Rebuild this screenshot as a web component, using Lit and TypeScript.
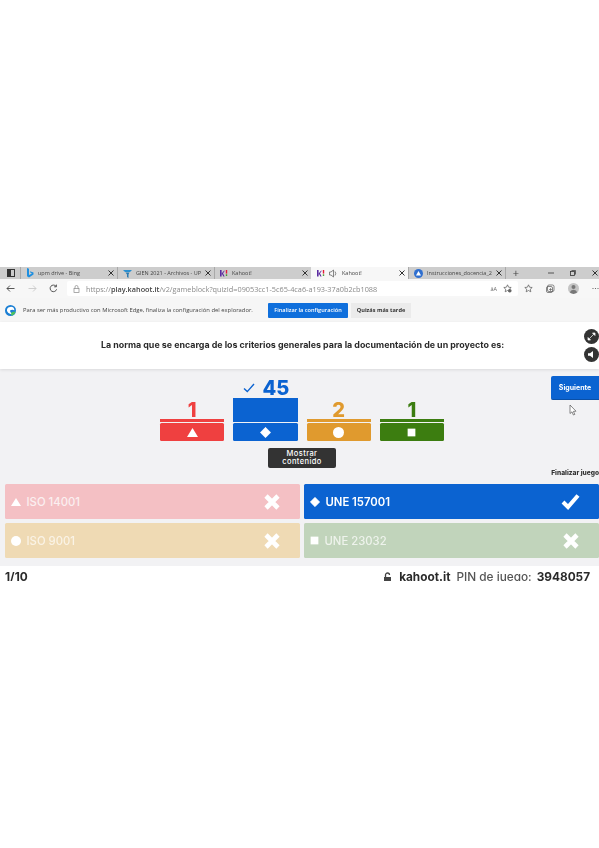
import { LitElement, html, css, svg } from "lit";
import { customElement } from "lit/decorators.js";

const tri = (s: number) => svg`<svg width=${s} height=${s} viewBox="0 0 10 10"><path d="M5 1 L10 9 H0 Z" fill="#fff"/></svg>`;
const dia = (s: number) => svg`<svg width=${s} height=${s} viewBox="0 0 10 10"><path d="M5 .3 L9.7 5 L5 9.7 L.3 5 Z" fill="#fff" stroke="#fff" stroke-linejoin="round" stroke-width=".6"/></svg>`;
const cir = (s: number) => svg`<svg width=${s} height=${s} viewBox="0 0 10 10"><circle cx="5" cy="5" r="5" fill="#fff"/></svg>`;
const squ = (s: number) => svg`<svg width=${s} height=${s} viewBox="0 0 10 10"><rect x=".7" y=".7" width="8.6" height="8.6" fill="#fff"/></svg>`;
const cross = svg`<svg width="18" height="18" viewBox="0 0 18 18"><path d="M3 3 L15 15 M15 3 L3 15" stroke="#fff" stroke-width="4.6" stroke-linecap="butt"/></svg>`;
const check = svg`<svg width="19" height="17" viewBox="0 0 19 17"><path d="M2 9 L7 14 L17 2.5" fill="none" stroke="#fff" stroke-width="4"/></svg>`;
const close = svg`<svg width="6" height="6" viewBox="0 0 6 6"><path d="M.5 .5 L5.5 5.5 M5.5 .5 L.5 5.5" stroke="#333" stroke-width="1"/></svg>`;
const kFav = svg`<svg width="8" height="8" viewBox="0 0 8 8"><rect x="0" y="1" width="1.6" height="6.5" fill="#5a2ba0"/><path d="M1.6 4.4 L4.4 1.2 V2.4 L3 4.2 L4.6 7.5 H3.4 L2.2 5.2 L1.6 5.8 Z" fill="#5a2ba0"/><rect x="5.8" y="1" width="1.4" height="3.6" fill="#e21b3c"/><rect x="5.8" y="5.4" width="1.4" height="1.4" fill="#26890c"/></svg>`;

const tabs = [
  { label: "upm drive - Bing", w: 97, icon: svg`<svg width="8" height="10" viewBox="0 0 8 10"><path d="M1 0 L3 .7 V7 L6 5.5 L4.5 4.8 L3.8 3.2 L7.5 4.4 V6.6 L3 9.5 L1 8.3 Z" fill="#1d8fe0"/></svg>` },
  { label: "GIEN 2021 - Archivos - UP", w: 97, icon: svg`<svg width="9" height="9" viewBox="0 0 9 9"><path d="M0 1 H9 L7 3 H2 Z" fill="#2a8fd0"/><path d="M2.5 3.6 H6.5 L5.5 5.4 V9 L4 8 V5.4 Z" fill="#2a7ab0"/></svg>` },
  { label: "Kahoot!", w: 97, icon: kFav },
  { label: "Kahoot!", w: 97, active: true, sound: true, icon: kFav },
  { label: "Instrucciones_docencia_20", w: 97, icon: svg`<svg width="9" height="9" viewBox="0 0 9 9"><circle cx="4.5" cy="4.5" r="4.5" fill="#2f6fd0"/><path d="M4.5 2 L7 6.6 H2 Z" fill="#fff"/></svg>` },
];

const bars = [
  { n: "1", color: "#ef4040", icon: tri(11) },
  { n: "45", color: "#0b63d1", icon: dia(11), correct: true },
  { n: "2", color: "#e09a2e", icon: cir(11) },
  { n: "1", color: "#3c7d10", icon: squ(9) },
];

const answers = [
  { t: "ISO 14001", cls: "red", icon: tri(10), mark: cross },
  { t: "UNE 157001", cls: "blue", icon: dia(10), mark: check },
  { t: "ISO 9001", cls: "yellow", icon: cir(10), mark: cross },
  { t: "UNE 23032", cls: "green", icon: squ(9), mark: cross },
];

@customElement("app-root")
export class AppRoot extends LitElement {
  static styles = css`
    :host { display: block; height: 848px; background: #fff; overflow: hidden; font-family: "Open Sans", "Liberation Sans", sans-serif; color: #333; }
    .shot { margin-top: 267px; height: 314px; overflow: hidden; filter: blur(0.5px); position: relative; }

    .tabbar { display: flex; align-items: center; height: 12px; background: #cdcdcd; }
    .sys { width: 20px; display: flex; justify-content: center; padding-left: 1px; box-sizing: border-box; }
    .tab { display: flex; align-items: center; height: 12px; box-sizing: border-box; padding: 0 3px 0 5px; gap: 4px; border-left: 1px solid #a9a9a9; font-size: 5.5px; color: #444; white-space: nowrap; overflow: hidden; }
    .tab.active { background: #f7f7f7; border-left-color: transparent; }
    .tab .lbl { flex: 1; overflow: hidden; }
    .plus { width: 20px; text-align: center; font-size: 11px; line-height: 12px; color: #444; border-left: 1px solid #a9a9a9; margin-left: 0; }
    .winctl { margin-left: auto; display: flex; align-items: center; gap: 16px; padding-right: 1px; }

    .addr { display: flex; align-items: center; height: 19px; background: #f7f7f7; }
    .navs { display: flex; align-items: center; gap: 12.5px; width: 67px; padding-left: 6px; box-sizing: border-box; }
    .url { flex: 0 0 451px; height: 15px; box-sizing: border-box; background: #fff; border-radius: 2px; display: flex; align-items: center; gap: 6px; padding: 0 6px 0 6px; font-size: 7.3px; color: #8a8a8a; white-space: nowrap; }
    .url b { font-weight: 600; color: #444; }
    .url .aa { margin-left: auto; font-size: 5.5px; color: #666; }
    .tools { display: flex; align-items: center; gap: 13px; padding-left: 6px; }

    .info { display: flex; align-items: center; height: 24px; background: #f6f6f6; padding-left: 5px; font-size: 5.85px; color: #444; white-space: nowrap; }
    .info .msg { width: 252px; padding-left: 7px; box-sizing: border-box; }
    .btn-a { background: #0f6fdc; color: #fff; font-weight: 600; font-size: 5.6px; height: 15px; width: 80px; display: flex; align-items: center; justify-content: center; border-radius: 1px; }
    .btn-b { background: #ebebeb; color: #333; font-weight: 700; font-size: 5.6px; height: 15px; width: 60px; margin-left: 3px; display: flex; align-items: center; justify-content: center; }

    .q { height: 47px; background: #fff; display: flex; align-items: center; position: relative; box-shadow: 0 1px 3px rgba(0,0,0,.1); z-index: 1; }
    .q h1 { margin: 0 0 0 101px; font: 700 8.9px/1 Inter, "Open Sans", sans-serif; color: #2a2a2a; white-space: nowrap; }
    .rounds { margin-left: auto; display: flex; flex-direction: column; gap: 3px; }
    .round { width: 15px; height: 15px; border-radius: 50%; background: #333; display: flex; align-items: center; justify-content: center; }

    .game { height: 197px; background: #f2f2f4; box-sizing: border-box; font-family: Inter, "Open Sans", sans-serif; }
    .stage { height: 115px; display: grid; grid-template-columns: 160px 284px 1fr; }
    .mid { padding-top: 9px; display: flex; flex-direction: column; align-items: center; }
    .chart { display: flex; align-items: flex-end; gap: 9px; height: 63px; width: 100%; }
    .col { flex: 1; display: flex; flex-direction: column; align-items: stretch; }
    .num { text-align: center; font-weight: 800; font-size: 20px; line-height: 18px; }
    .num.big { display: flex; align-items: center; justify-content: center; gap: 7px; height: 20px; padding-left: 2px; }
    .fill { height: 24px; }
    .line { height: 3px; }
    .blk { height: 18px; margin-top: 1px; border-radius: 1.5px; display: flex; align-items: center; justify-content: center; }
    .show { margin-top: 7px; width: 68px; height: 20px; background: #333; color: #fff; border-radius: 2px; font-size: 7.5px; font-weight: 500; line-height: 8px; letter-spacing: .4px; text-align: center; display: flex; align-items: center; justify-content: center; }
    .right { display: flex; flex-direction: column; align-items: flex-end; position: relative; }
    .next { margin-top: 7px; width: 48px; height: 24px; background: #0b63d1; color: #fff; border-radius: 2px 0 0 2px; border-bottom: 1px solid #0a4fa6; box-sizing: border-box; font-size: 7px; font-weight: 700; display: flex; align-items: center; justify-content: center; }
    .end { margin-top: auto; padding-bottom: 7px; font-size: 6.6px; font-weight: 800; color: #333; white-space: nowrap; }
    .cursor { position: absolute; left: 125px; top: 35px; }

    .answers { display: grid; grid-template-columns: 295px 295px; gap: 4px; padding-left: 5px; }
    .ans { height: 35px; border-radius: 1.5px; display: flex; align-items: center; padding-left: 6px; box-sizing: border-box; color: #fff; font-size: 11.3px; font-weight: 500; gap: 5.5px; }
    .ans .mark { margin-left: auto; margin-right: 19px; display: flex; }
    .ans.red { background: #f4c0c4; color: #fbeff0; }
    .ans.blue { background: #0b63d1; font-weight: 600; }
    .ans.yellow { background: #efdab4; color: #faf3e6; }
    .ans.green { background: #c1d4bb; color: #eef3ec; }

    .foot { height: 15px; background: #fff; display: flex; align-items: flex-start; justify-content: space-between; padding: 4px 9px 0 5px; box-sizing: border-box; font: 500 11.8px/14px Inter, "Open Sans", sans-serif; color: #555; white-space: nowrap; }
    .foot b { font-weight: 700; color: #2a2a2a; }
    .foot .pin { display: flex; align-items: center; gap: 5px; }
  `;

  render() {
    return html`<div class="shot">
      <div class="tabbar">
        <div class="sys"><svg width="8" height="8" viewBox="0 0 8 8"><rect x=".5" y=".5" width="7" height="7" fill="none" stroke="#333"/><rect x="1" y="1" width="3" height="6" fill="#333"/></svg></div>
        ${tabs.map(t => html`<div class="tab ${t.active ? "active" : ""}" style="width:${t.w}px">
          ${t.icon}
          ${t.sound ? svg`<svg width="9" height="9" viewBox="0 0 9 9"><path d="M.5 3 H2 L4.5 1 V8 L2 6 H.5 Z M6 2.5 Q7.5 4.5 6 6.5" fill="none" stroke="#555" stroke-width=".7"/></svg>` : ""}
          <span class="lbl">${t.label}</span>${close}</div>`)}
        <div class="plus">+</div>
        <div class="winctl">
          <svg width="6" height="6" viewBox="0 0 6 6"><path d="M0 3 H6" stroke="#333" stroke-width=".8"/></svg>
          <svg width="6" height="6" viewBox="0 0 6 6"><rect x=".5" y="1.5" width="4" height="4" fill="none" stroke="#333" stroke-width=".8"/><path d="M1.5 .5 H5.5 V4.5" fill="none" stroke="#333" stroke-width=".7"/></svg>
          ${close}
        </div>
      </div>

      <div class="addr">
        <div class="navs">
          <svg width="9" height="9" viewBox="0 0 9 9"><path d="M8.5 4.5 H1 M4 1.5 L1 4.5 L4 7.5" fill="none" stroke="#444" stroke-width=".9"/></svg>
          <svg width="9" height="9" viewBox="0 0 9 9"><path d="M.5 4.5 H8 M5 1.5 L8 4.5 L5 7.5" fill="none" stroke="#c8c8c8" stroke-width=".9"/></svg>
          <svg width="9" height="9" viewBox="0 0 9 9"><path d="M7.6 5.3 A3.3 3.3 0 1 1 7 2.3 M7.4 .6 V2.8 H5.2" fill="none" stroke="#444" stroke-width=".9"/></svg>
        </div>
        <div class="url">
          <svg width="7" height="8" viewBox="0 0 7 8"><rect x="1" y="3.4" width="5" height="4" fill="none" stroke="#888" stroke-width=".7"/><path d="M2 3.4 V2 A1.5 1.5 0 0 1 5 2 V3.4" fill="none" stroke="#888" stroke-width=".7"/></svg>
          <span>https://<b>play.kahoot.it</b>/v2/gameblock?quizId=09053cc1-5c65-4ca6-a193-37a0b2cb1088</span>
          <span class="aa">âA</span>
          <svg width="9" height="9" viewBox="0 0 9 9"><path d="M4.5 .8 L5.6 3.2 L8.2 3.5 L6.3 5.2 L6.8 7.8 L4.5 6.5 L2.2 7.8 L2.7 5.2 L.8 3.5 L3.4 3.2 Z" fill="none" stroke="#555" stroke-width=".7"/><circle cx="6.8" cy="6.8" r="1.8" fill="#666"/></svg>
        </div>
        <div class="tools">
          <svg width="9" height="9" viewBox="0 0 9 9"><path d="M4.5 .8 L5.6 3.2 L8.2 3.5 L6.3 5.2 L6.8 7.8 L4.5 6.5 L2.2 7.8 L2.7 5.2 L.8 3.5 L3.4 3.2 Z" fill="none" stroke="#555" stroke-width=".7"/></svg>
          <svg width="9" height="9" viewBox="0 0 9 9"><rect x="1.5" y="1" width="6.5" height="6.5" rx="1.5" fill="none" stroke="#555" stroke-width=".7"/><rect x=".5" y="2.5" width="6" height="6" rx="1.5" fill="none" stroke="#555" stroke-width=".7"/><path d="M3 5.5 H6 M4.5 4 V7" stroke="#555" stroke-width=".6"/></svg>
          <svg width="11" height="11" viewBox="0 0 11 11"><circle cx="5.5" cy="5.5" r="5.5" fill="#c4c4c4"/><circle cx="5.5" cy="4" r="2" fill="#777"/><path d="M1.8 9.4 A3.8 3.3 0 0 1 9.2 9.4 L5.5 11 Z" fill="#777"/></svg>
          <svg width="7" height="3" viewBox="0 0 7 3"><circle cx="1" cy="1.5" r=".6" fill="#555"/><circle cx="3.5" cy="1.5" r=".6" fill="#555"/><circle cx="6" cy="1.5" r=".6" fill="#555"/></svg>
        </div>
      </div>

      <div class="info">
        <svg width="11" height="11" viewBox="0 0 11 11"><circle cx="5.5" cy="5.5" r="5.5" fill="#1b7fd4"/><path d="M2 6 A3.6 3.6 0 0 1 9.4 5.2 Q7 4 5 5.5 Q5 8.5 9 8.6 A5 5 0 0 1 2 6 Z" fill="#fff"/><path d="M6 10.6 Q9.8 10 10.6 6.4 L7 7 Q5.8 8.4 6 10.6 Z" fill="#4cc25c"/></svg>
        <div class="msg">Para ser más productivo con Microsoft Edge, finaliza la configuración del explorador.</div>
        <div class="btn-a">Finalizar la configuración</div>
        <div class="btn-b">Quizás más tarde</div>
      </div>

      <div class="q">
        <h1>La norma que se encarga de los criterios generales para la documentación de un proyecto es:</h1>
        <div class="rounds">
          <div class="round"><svg width="9" height="9" viewBox="0 0 9 9"><path d="M5.5 1 H8 V3.5 Z M1 5.5 V8 H3.5 Z M6.8 2.2 L2.2 6.8" fill="#fff" stroke="#fff" stroke-width=".7"/></svg></div>
          <div class="round"><svg width="9" height="9" viewBox="0 0 9 9"><path d="M1 3.2 H3 L6 1 V8 L3 5.8 H1 Z" fill="#fff"/></svg></div>
        </div>
      </div>

      <div class="game">
        <div class="stage">
          <div></div>
          <div class="mid">
            <div class="chart">
              ${bars.map(b => html`<div class="col">
                ${b.correct
                  ? html`<div class="num big" style="color:${b.color}"><svg width="12" height="10" viewBox="0 0 12 10"><path d="M1 5.5 L4.3 8.6 L11 1" fill="none" stroke="${b.color}" stroke-width="1.4"/></svg><span>${b.n}</span></div><div class="fill" style="background:${b.color}"></div>`
                  : html`<div class="num" style="color:${b.color}">${b.n}</div><div class="line" style="background:${b.color}"></div>`}
                <div class="blk" style="background:${b.color}">${b.icon}</div>
              </div>`)}
            </div>
            <div class="show">Mostrar<br />contenido</div>
          </div>
          <div class="right">
            <div class="next">Siguiente</div>
            <svg class="cursor" width="8" height="12" viewBox="0 0 8 12"><path d="M1 1 V9.5 L3 7.8 L4.4 11 L5.8 10.4 L4.4 7.4 L7 7.2 Z" fill="#fff" stroke="#555" stroke-width=".7"/></svg>
            <div class="end">Finalizar juego</div>
          </div>
        </div>
        <div class="answers">
          ${answers.map(a => html`<div class="ans ${a.cls}">${a.icon}<span>${a.t}</span><span class="mark">${a.mark}</span></div>`)}
        </div>
      </div>

      <div class="foot">
        <b>1/10</b>
        <div class="pin">
          <svg width="9" height="11" viewBox="0 0 9 11"><rect x="1" y="5" width="7" height="6" fill="#444"/><path d="M2.5 5 V3 A2 2 0 0 1 6.5 3" fill="none" stroke="#444" stroke-width="1.3"/></svg>
          <b style="margin-left:2px">kahoot.it</b><span style="margin-left:1px">PIN de juego:</span><b>3948057</b>
        </div>
      </div>
    </div>`;
  }
}
